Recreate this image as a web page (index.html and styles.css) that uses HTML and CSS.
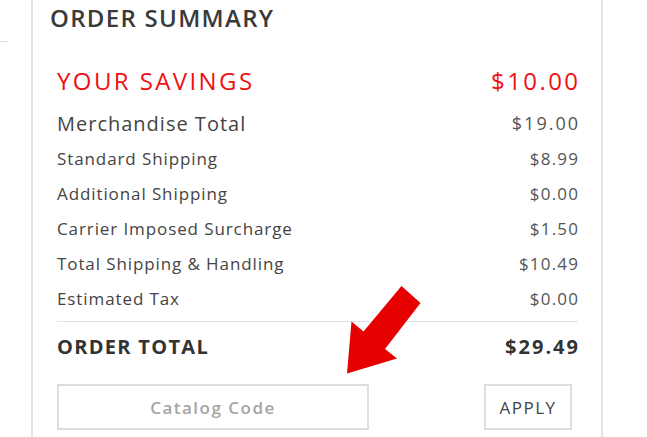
FILE: index.html
```html
<!DOCTYPE html>
<html lang="en">
<head>
    <meta charset="UTF-8">
    <meta name="viewport" content="width=device-width, initial-scale=1.0">
    <title>Order Summary</title>
    <link rel="stylesheet" href="styles.css">
</head>
<body>
    <div class="page">
        <div class="side-col">
            <div class="side-rule"></div>
        </div>
        <div class="summary">
            <h2 class="summary-title">ORDER SUMMARY</h2>
            <div class="summary-body">
                <div class="row savings">
                    <span>YOUR SAVINGS</span>
                    <span>$10.00</span>
                </div>
                <div class="row merch">
                    <span>Merchandise Total</span>
                    <span class="amount">$19.00</span>
                </div>
                <div class="row line">
                    <span>Standard Shipping</span>
                    <span class="amount">$8.99</span>
                </div>
                <div class="row line">
                    <span>Additional Shipping</span>
                    <span class="amount">$0.00</span>
                </div>
                <div class="row line">
                    <span>Carrier Imposed Surcharge</span>
                    <span class="amount">$1.50</span>
                </div>
                <div class="row line">
                    <span>Total Shipping &amp; Handling</span>
                    <span class="amount">$10.49</span>
                </div>
                <div class="row line">
                    <span>Estimated Tax</span>
                    <span class="amount">$0.00</span>
                </div>
                <div class="row total">
                    <span>ORDER TOTAL</span>
                    <span class="total-amount">$29.49</span>
                </div>
                <div class="catalog">
                    <input class="catalog-input" type="text" placeholder="Catalog Code">
                    <button class="apply-button">APPLY</button>
                </div>
            </div>
        </div>
    </div>

    <!-- callout arrow pointing at the catalog code field -->
    <svg class="callout" width="647" height="437" viewBox="0 0 647 437">
        <polygon points="401.5,286 420.5,303 385,349 397,358.5 347,373.5 351.5,321.5 363.5,331.5" fill="#e60000"/>
    </svg>
</body>
</html>
```

FILE: styles.css
```css
body {
    margin: 0;
    font-family: "Open Sans", "DejaVu Sans", sans-serif;
    color: #444;
    background-color: #fff;
    overflow: hidden;
}

.page {
    display: flex;
    height: 437px;
}

.side-col {
    width: 31px;
}

.side-rule {
    width: 8px;
    height: 41px;
    border-bottom: 1px solid #ddd;
}

.summary {
    width: 568px;
    border-left: 2px solid #e4e4e4;
    border-right: 2px solid #e4e4e4;
}

.summary-title {
    margin: 0;
    padding-left: 17px;
    font-size: 24px;
    font-weight: 600;
    line-height: 36px;
    color: #3a3a3a;
    letter-spacing: 1.3px;
}

.summary-body {
    padding: 24px 23px 0 24px;
}

.row {
    display: flex;
    justify-content: space-between;
    align-items: center;
}

/* ClearType-style wide spacing: trim trailing gap on right-hand amounts */
.row span:last-child {
    margin-right: calc(-1 * var(--ls, 0px));
}

.savings {
    --ls: 2.4px;
    height: 40px;
    font-size: 24px;
    letter-spacing: 2.4px;
    color: #ee1111;
}

.merch {
    --ls: 1px;
    height: 36px;
    margin-top: 5px;
    font-size: 20px;
    letter-spacing: 1px;
}

.merch .amount {
    --ls: 2px;
    font-size: 18px;
    letter-spacing: 2px;
}

.line {
    --ls: 0.9px;
    height: 35px;
    font-size: 17px;
    letter-spacing: 0.9px;
}

.line .amount {
    --ls: 1.2px;
    letter-spacing: 1.2px;
}

.amount {
    color: #555;
}

.total {
    --ls: 1.3px;
    height: 48px;
    margin-top: 5px;
    border-top: 1px solid #e2e2e2;
    font-size: 20px;
    font-weight: 700;
    letter-spacing: 1.3px;
    color: #333;
}

.total .total-amount {
    --ls: 2px;
    letter-spacing: 2px;
}

.catalog {
    display: flex;
    justify-content: space-between;
    margin-top: 14px;
    padding-right: 6px;
}

.catalog-input {
    width: 312px;
    height: 46px;
    box-sizing: border-box;
    border: 2px solid #ddd;
    text-align: center;
    font-family: inherit;
    font-size: 17px;
    font-weight: 600;
    letter-spacing: 1.5px;
    outline: none;
}

.catalog-input::placeholder {
    color: #a5a5a5;
}

.apply-button {
    width: 88px;
    height: 46px;
    box-sizing: border-box;
    border: 2px solid #ddd;
    background-color: #fff;
    font-family: inherit;
    font-size: 17px;
    letter-spacing: 1.5px;
    color: #444;
    cursor: pointer;
}

.callout {
    position: absolute;
    top: 0;
    left: 0;
    pointer-events: none;
}
```
